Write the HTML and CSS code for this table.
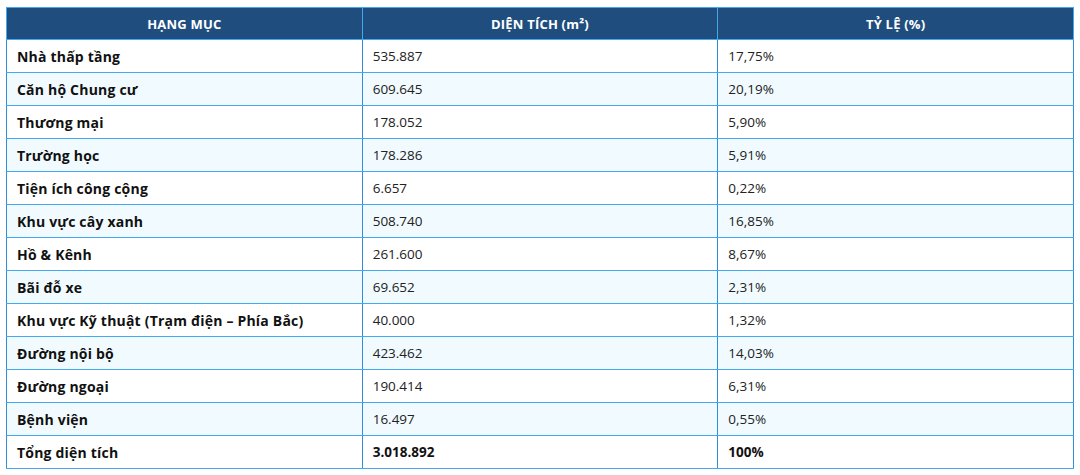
FILE: index.html
```html
<!DOCTYPE html>
<html lang="vi">
<head>
<meta charset="utf-8">
<link rel="stylesheet" href="styles.css">
</head>
<body>
<table class="area-table">
  <thead>
    <tr>
      <th>HẠNG MỤC</th>
      <th>DIỆN TÍCH (m²)</th>
      <th>TỶ LỆ (%)</th>
    </tr>
  </thead>
  <tbody>
    <tr><td class="name">Nhà thấp tầng</td><td>535.887</td><td>17,75%</td></tr>
    <tr><td class="name">Căn hộ Chung cư</td><td>609.645</td><td>20,19%</td></tr>
    <tr><td class="name">Thương mại</td><td>178.052</td><td>5,90%</td></tr>
    <tr><td class="name">Trường học</td><td>178.286</td><td>5,91%</td></tr>
    <tr><td class="name">Tiện ích công cộng</td><td>6.657</td><td>0,22%</td></tr>
    <tr><td class="name">Khu vực cây xanh</td><td>508.740</td><td>16,85%</td></tr>
    <tr><td class="name">Hồ &amp; Kênh</td><td>261.600</td><td>8,67%</td></tr>
    <tr><td class="name">Bãi đỗ xe</td><td>69.652</td><td>2,31%</td></tr>
    <tr><td class="name">Khu vực Kỹ thuật (Trạm điện – Phía Bắc)</td><td>40.000</td><td>1,32%</td></tr>
    <tr><td class="name">Đường nội bộ</td><td>423.462</td><td>14,03%</td></tr>
    <tr><td class="name">Đường ngoại</td><td>190.414</td><td>6,31%</td></tr>
    <tr><td class="name">Bệnh viện</td><td>16.497</td><td>0,55%</td></tr>
    <tr class="total"><td class="name">Tổng diện tích</td><td>3.018.892</td><td>100%</td></tr>
  </tbody>
</table>
</body>
</html>
```
FILE: styles.css
```css
html, body {
  margin: 0;
  padding: 0;
  background: #ffffff;
}
body {
  padding: 7px 6px 0 6px;
  font-family: "Open Sans", "Noto Sans", sans-serif;
  color: #1a1a1a;
}
.area-table {
  width: 1068px;
  border-collapse: collapse;
  table-layout: fixed;
  border: 1px solid #42a8f0;
}
.area-table th {
  background: #1f4e7e;
  color: #ffffff;
  font-size: 13px;
  font-weight: 700;
  letter-spacing: 0.2px;
  height: 31px;
  padding: 0 10px;
  text-align: center;
  border: 1px solid #42a8f0;
  border-top: 0;
}
.area-table td {
  height: 32px;
  padding: 0 10px;
  font-size: 13.5px;
  font-weight: 400;
  color: #222222;
  border: 1px solid #42a8f0;
  border-left: 1px solid #2f8fdc;
  border-right: 1px solid #2f8fdc;
}
.area-table tbody tr:nth-child(even) td {
  background: #f1fbff;
}
.area-table td.name {
  font-size: 14px;
  font-weight: 700;
  letter-spacing: 0.2px;
  color: #111111;
}
.area-table tr.total td {
  font-weight: 700;
  color: #111111;
}
```
